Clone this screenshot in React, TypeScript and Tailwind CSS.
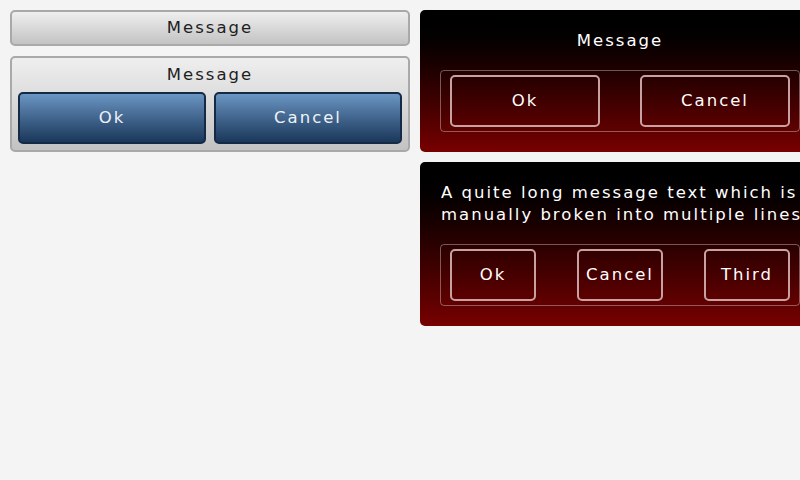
const font = { fontFamily: '"DejaVu Sans", sans-serif' }

function GrayButton({ label }: { label: string }) {
  return (
    <div className="flex h-[52px] flex-1 items-center justify-center rounded-[5px] border-2 border-[#152a44] bg-gradient-to-b from-[#6b96c3] to-[#1b385b] pt-px text-[16.5px] tracking-[2px] text-[#eef2f7]">
      {label}
    </div>
  )
}

function RedButton({ label, width }: { label: string; width: string }) {
  return (
    <div
      className={`flex h-[52px] items-center justify-center rounded-[5px] border-2 border-[#c8a2a2] pt-px text-[16.5px] tracking-[2px] text-white ${width}`}
    >
      {label}
    </div>
  )
}

export default function App() {
  return (
    <div
      className="flex h-[480px] w-[800px] gap-[10px] overflow-hidden bg-[#f4f4f4] p-[10px]"
      style={font}
    >
      <div className="flex w-[400px] shrink-0 flex-col gap-[10px]">
        <div className="flex h-[36px] items-center justify-center rounded-[5px] border-2 border-[#a9a9a9] bg-gradient-to-b from-[#efefef] to-[#c3c3c3] pt-px text-[16.5px] tracking-[2px] text-[#1e1e1e]">
          Message
        </div>

        <div className="flex flex-col rounded-[5px] border-2 border-[#a9a9a9] bg-gradient-to-b from-[#efefef] to-[#c3c3c3] px-[6px] pb-[6px] pt-[5px]">
          <div className="text-center text-[16.5px] leading-[24px] tracking-[2px] text-[#1e1e1e]">
            Message
          </div>
          <div className="mt-[5px] flex gap-[8px]">
            <GrayButton label="Ok" />
            <GrayButton label="Cancel" />
          </div>
        </div>
      </div>

      <div className="flex w-[400px] shrink-0 flex-col gap-[10px]">
        <div className="flex flex-col rounded-[5px] bg-gradient-to-b from-[#000000] to-[#780000] p-[20px]">
          <div className="pt-px text-center text-[16.5px] leading-[20px] tracking-[2px] text-white">
            Message
          </div>
          <div className="mt-[19px] flex justify-between rounded-[4px] border border-white/35 px-[9px] py-[4px]">
            <RedButton label="Ok" width="w-[150px]" />
            <RedButton label="Cancel" width="w-[150px]" />
          </div>
        </div>

        <div className="flex flex-col rounded-[5px] bg-gradient-to-b from-[#000000] to-[#780000] p-[20px]">
          <div className="whitespace-nowrap pl-px text-[16.5px] leading-[22px] tracking-[2px] text-white">
            A quite long message text which is
            <br />
            manually broken into multiple lines
          </div>
          <div className="mt-[18px] flex justify-between rounded-[4px] border border-white/35 px-[9px] py-[4px]">
            <RedButton label="Ok" width="w-[86px]" />
            <RedButton label="Cancel" width="w-[86px]" />
            <RedButton label="Third" width="w-[86px]" />
          </div>
        </div>
      </div>
    </div>
  )
}
